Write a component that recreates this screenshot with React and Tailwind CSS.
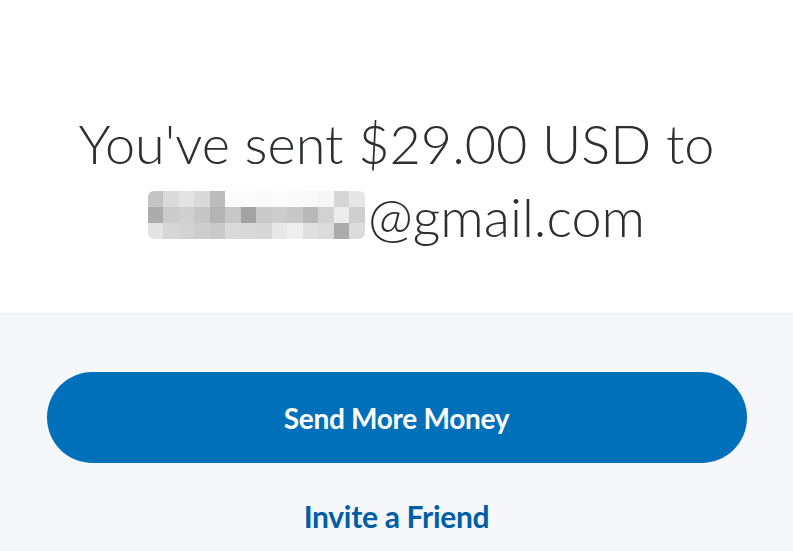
import React from "react";

const blurCells = [
  ["bg-[#c4c4c4]", "bg-[#dadada]", "bg-[#e3e3e3]", "bg-[#d9d9d9]", "bg-[#bcbcbc]", "bg-[#fbfbfb]", "bg-[#fbfbfb]", "bg-[#fafafa]", "bg-[#fbfbfb]", "bg-[#fafafa]", "bg-[#f9f9f9]", "bg-[#f6f6f6]", "bg-[#d6d6d6]", "bg-[#e6e6e6]"],
  ["bg-[#ababab]", "bg-[#cbcbcb]", "bg-[#cfcfcf]", "bg-[#c6c6c6]", "bg-[#b4b4b4]", "bg-[#c8c8c8]", "bg-[#a3a3a3]", "bg-[#cacaca]", "bg-[#cdcdcd]", "bg-[#c8c8c8]", "bg-[#b8b8b8]", "bg-[#d2d2d2]", "bg-[#ececec]", "bg-[#cfcfcf]"],
  ["bg-[#e3e3e3]", "bg-[#d6d6d6]", "bg-[#d3d3d3]", "bg-[#cdcdcd]", "bg-[#c9c9c9]", "bg-[#dadada]", "bg-[#d9d9d9]", "bg-[#d6d6d6]", "bg-[#e8e8e8]", "bg-[#efefef]", "bg-[#e0e0e0]", "bg-[#dbdbdb]", "bg-[#ababab]", "bg-[#dcdcdc]"],
];

function BlurredName() {
  return (
    <span className="inline-block align-[-2px] mr-[3px] overflow-hidden rounded-[6px]">
      <span className="grid grid-cols-[repeat(14,15.5px)] grid-rows-[repeat(3,16px)]">
        {blurCells.flat().map((c, i) => (
          <span key={i} className={c} />
        ))}
      </span>
    </span>
  );
}

export default function App() {
  return (
    <div className="w-[793px] h-[551px] overflow-hidden bg-[#f5f7fa] font-['Lato','Open_Sans',sans-serif]">
      {/* Top message */}
      <div className="h-[314px] bg-white border-b border-[#eef0f2] flex flex-col items-center pt-[107px]">
        <h1 className="text-[54px] leading-[73px] font-light text-[#2c2e2f] text-center">
          You've sent $29.00 USD to
          <br />
          <BlurredName />@gmail.com
        </h1>
      </div>

      {/* Actions */}
      <div className="flex flex-col items-center pt-[58px]">
        <button className="w-[700px] h-[91px] rounded-full bg-[#0070ba] text-white text-[28px] font-bold tracking-[-0.3px]">
          Send More Money
        </button>
        <a className="mt-[33px] text-[30px] leading-[40px] font-bold text-[#005ea6] tracking-[-0.3px]">
          Invite a Friend
        </a>
      </div>
    </div>
  );
}
